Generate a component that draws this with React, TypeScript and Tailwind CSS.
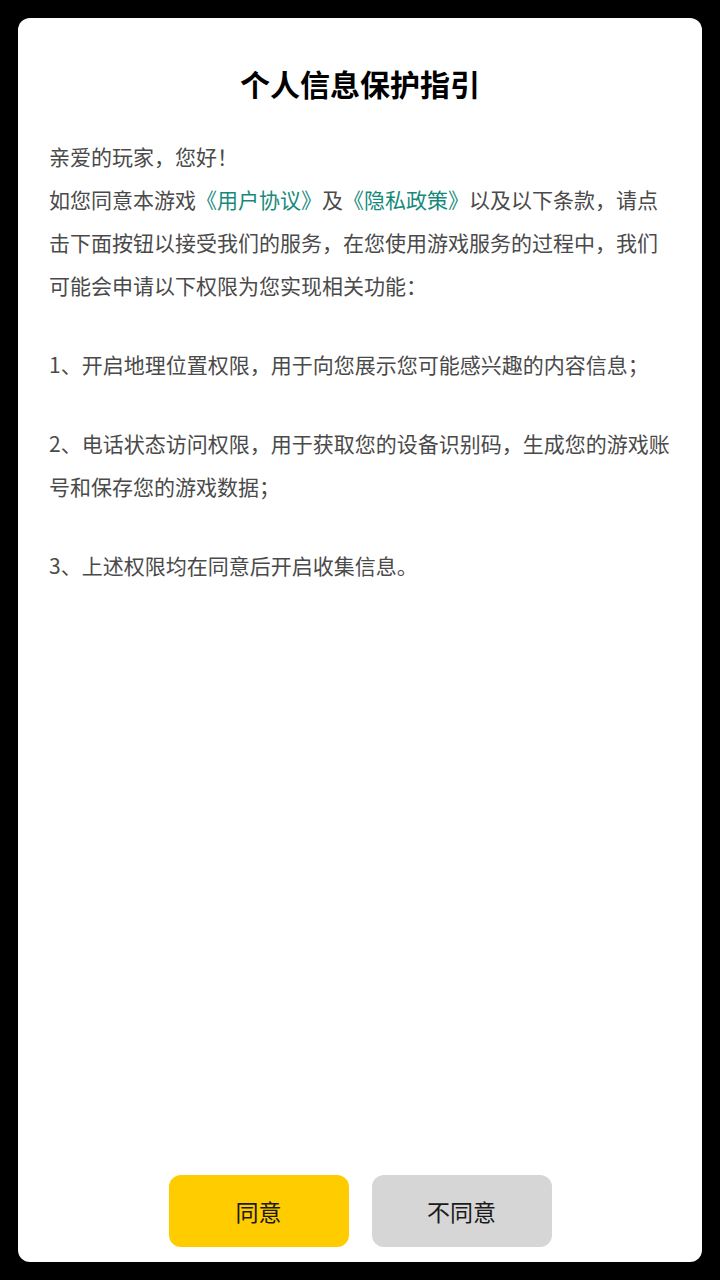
import React from "react";

const font = { fontFamily: '"Noto Sans CJK SC", "Noto Sans", sans-serif' };

export default function App() {
  return (
    <div className="h-[1280px] w-[720px] bg-black p-[18px]" style={font}>
      <div className="flex h-full flex-col rounded-[12px] bg-white">
        <h1 className="mt-[45px] text-center text-[30px] leading-[40px] font-bold text-black">
          个人信息保护指引
        </h1>
        <div className="mt-[32px] w-[655px] pl-[31px] text-[21px] leading-[43px] text-[#4a4a4a]">
          <p>亲爱的玩家，您好！</p>
          <p>
            如您同意本游戏<span className="text-[#168a7a]">《用户协议》</span>及<span className="text-[#168a7a]">《隐私政策》</span>以及以下条款，请点击下面按钮以接受我们的服务，在您使用游戏服务的过程中，我们可能会申请以下权限为您实现相关功能：
          </p>
          <p className="mt-[36px]">1、开启地理位置权限，用于向您展示您可能感兴趣的内容信息；</p>
          <p className="mt-[36px]">2、电话状态访问权限，用于获取您的设备识别码，生成您的游戏账号和保存您的游戏数据；</p>
          <p className="mt-[36px]">3、上述权限均在同意后开启收集信息。</p>
        </div>
        <div className="flex-1" />
        <div className="mb-[15px] flex justify-center gap-[23px]">
          <button className="flex h-[72px] w-[180px] items-center justify-center rounded-[12px] bg-[#ffcc00] text-[23px] text-[#1a1a1a]">
            同意
          </button>
          <button className="flex h-[72px] w-[180px] items-center justify-center rounded-[12px] bg-[#d6d6d6] text-[23px] text-[#1a1a1a]">
            不同意
          </button>
        </div>
      </div>
    </div>
  );
}
